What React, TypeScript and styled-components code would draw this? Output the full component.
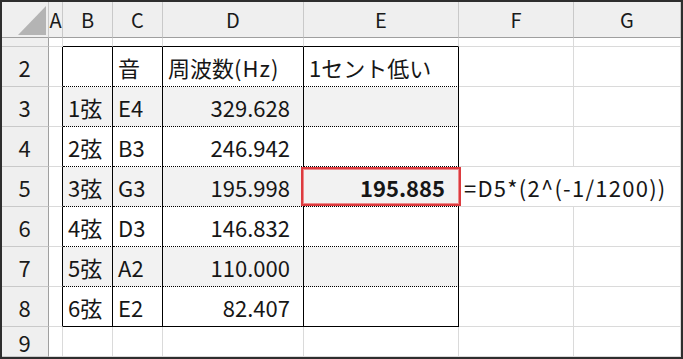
import React from 'react';
import styled, { createGlobalStyle } from 'styled-components';

const GlobalStyle = createGlobalStyle`
  html, body {
    margin: 0;
    padding: 0;
    background: #ffffff;
  }
  body {
    font-family: "Noto Sans CJK JP", "Noto Sans", sans-serif;
  }
`;

// column widths include the 1px right gridline
const COL_WIDTHS = [47, 14, 50, 50, 141, 155, 115, 107];
const ROW_HEIGHTS = [36, 9, 40, 40, 40, 40, 40, 40, 40, 30];

const GRID = '#dadada';
const HEAD_LINE = '#c9c9c9';
const HEAD_EDGE = '#9f9f9f';
const SHADE = '#f2f2f2';

const Frame = styled.div`
  width: 683px;
  height: 359px;
  box-sizing: border-box;
  border: 2px solid #2e2e2e;
  background: #ffffff;
  overflow: hidden;
`;

const Sheet = styled.div`
  display: grid;
  grid-template-columns: ${COL_WIDTHS.map((w) => `${w}px`).join(' ')};
  grid-template-rows: ${ROW_HEIGHTS.map((h) => `${h}px`).join(' ')};
`;

const Corner = styled.div`
  box-sizing: border-box;
  background: #efefef;
  border-right: 1px solid ${HEAD_LINE};
  border-bottom: 1px solid ${HEAD_EDGE};
  display: flex;
  justify-content: flex-end;
  align-items: flex-end;
  padding: 0 2px 2px 0;
`;

const CornerTriangle = styled.div`
  width: 28px;
  height: 29px;
  background: #b4b4b4;
  clip-path: polygon(100% 0, 100% 100%, 0 100%);
`;

const ColHead = styled.div`
  box-sizing: border-box;
  background: #efefef;
  border-right: 1px solid ${HEAD_LINE};
  border-bottom: 1px solid ${HEAD_EDGE};
  display: flex;
  align-items: center;
  justify-content: center;
  font-size: 20px;
  color: #1a1a1a;
  padding-bottom: 1px;
`;

const RowHead = styled.div`
  box-sizing: border-box;
  background: #efefef;
  border-right: 1px solid ${HEAD_EDGE};
  border-bottom: 1px solid ${HEAD_LINE};
  display: flex;
  align-items: center;
  justify-content: center;
  font-size: 22px;
  color: #1a1a1a;
  padding-right: 1px;
`;

type Align = 'left' | 'right';

const Cell = styled.div<{
  $right: string;
  $bottom: string;
  $bg: string;
  $align: Align;
  $bold?: boolean;
  $spill?: boolean;
  $layer: number;
}>`
  box-sizing: border-box;
  position: relative;
  background: ${(p) => p.$bg};
  border-right: ${(p) => p.$right};
  border-bottom: ${(p) => p.$bottom};
  display: flex;
  align-items: center;
  justify-content: ${(p) => (p.$align === 'right' ? 'flex-end' : 'flex-start')};
  padding: ${(p) => (p.$align === 'right' ? '0 13px 0 0' : '0 0 0 5px')};
  font-size: 22px;
  font-weight: ${(p) => (p.$bold ? 700 : 400)};
  letter-spacing: ${(p) => (p.$spill ? '1.25px' : 'normal')};
  color: #161616;
  white-space: nowrap;
  overflow: ${(p) => (p.$spill || p.$layer > 1 ? 'visible' : 'hidden')};
  z-index: ${(p) => p.$layer};
`;

const Paren = styled.span`
  letter-spacing: 1px;
`;

const Selection = styled.div`
  position: absolute;
  left: -3px;
  right: -3px;
  top: 0;
  bottom: 0;
  border: 2px solid #dc3b3f;
  box-shadow: inset 0 0 0 1px #ee8a8c;
  pointer-events: none;
`;

const COLS = ['A', 'B', 'C', 'D', 'E', 'F', 'G'];

// table body B2:E8
const TABLE: Record<number, React.ReactNode[]> = {
  2: ['', '音', <>周波数<Paren>(Hz)</Paren></>, '1セント低い'],
  3: ['1弦', 'E4', '329.628', ''],
  4: ['2弦', 'B3', '246.942', ''],
  5: ['3弦', 'G3', '195.998', '195.885'],
  6: ['4弦', 'D3', '146.832', ''],
  7: ['5弦', 'A2', '110.000', ''],
  8: ['6弦', 'E2', '82.407', ''],
};

const solid = (c: string) => `1px solid ${c}`;

function cellProps(row: number, col: number) {
  // col: 0 = A ... 6 = G
  const inTable = row >= 2 && row <= 8 && col >= 1 && col <= 4;
  let right = solid(GRID);
  let bottom = solid(GRID);
  let bg = '#ffffff';

  if (inTable) {
    right = solid('#000');
    bottom = row === 8 ? solid('#000') : '1px dotted #000';
    if (row % 2 === 1) bg = SHADE;
  }
  if (row === 1 && col >= 1 && col <= 4) bottom = solid('#000');
  if (col === 0 && row >= 2 && row <= 8) right = solid('#000');
  if (row === 5 && col === 5) right = 'none';

  return { right, bottom, bg };
}

export default function App() {
  const rows = ROW_HEIGHTS.length - 1;
  return (
    <>
      <GlobalStyle />
      <Frame>
        <Sheet>
          <Corner>
            <CornerTriangle />
          </Corner>
          {COLS.map((c) => (
            <ColHead key={c}>{c}</ColHead>
          ))}
          {Array.from({ length: rows }, (_, i) => i + 1).map((row) => (
            <React.Fragment key={row}>
              <RowHead>{row === 1 ? '' : row}</RowHead>
              {COLS.map((_, col) => {
                const { right, bottom, bg } = cellProps(row, col);
                let text: React.ReactNode = '';
                let align: Align = 'left';
                if (TABLE[row] && col >= 1 && col <= 4) {
                  text = TABLE[row][col - 1];
                  if (row > 2 && col >= 3) align = 'right';
                }
                const selected = row === 5 && col === 4;
                const spill = row === 5 && col === 5;
                if (spill) text = '=D5*(2^(-1/1200))';
                return (
                  <Cell
                    key={col}
                    $right={right}
                    $bottom={bottom}
                    $bg={bg}
                    $align={align}
                    $bold={selected}
                    $spill={spill}
                    $layer={selected ? 3 : spill ? 2 : 0}
                  >
                    {text}
                    {selected && <Selection />}
                  </Cell>
                );
              })}
            </React.Fragment>
          ))}
        </Sheet>
      </Frame>
    </>
  );
}
